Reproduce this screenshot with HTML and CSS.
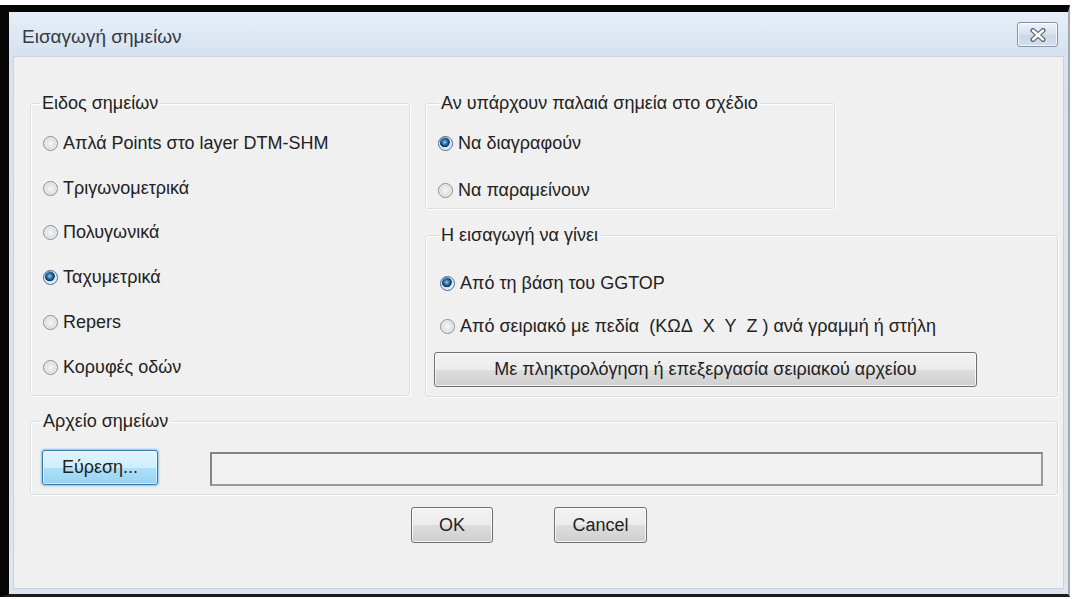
FILE: index.html
```html
<!DOCTYPE html>
<html lang="el">
<head>
<meta charset="utf-8">
<title>Εισαγωγή σημείων</title>
<link rel="stylesheet" href="styles.css">
</head>
<body>
<div class="window">
  <div class="titlebar">
    <span class="title">Εισαγωγή σημείων</span>
    <button class="close" aria-label="Κλείσιμο">
      <svg width="18" height="14" viewBox="0 0 18 14">
        <path d="M4 2.5 L14 11.5 M14 2.5 L4 11.5" stroke="#5d6670" stroke-width="5" stroke-linecap="round" fill="none"/>
        <path d="M4 2.5 L14 11.5 M14 2.5 L4 11.5" stroke="#ffffff" stroke-width="2.4" stroke-linecap="round" fill="none"/>
      </svg>
    </button>
  </div>

  <div class="client">
    <div class="top">
      <fieldset class="group g-kind">
        <legend>Ειδος σημείων</legend>
        <label class="opt"><span class="radio"></span>Απλά Points στο layer DTM-SHM</label>
        <label class="opt"><span class="radio"></span>Τριγωνομετρικά</label>
        <label class="opt"><span class="radio"></span>Πολυγωνικά</label>
        <label class="opt"><span class="radio on"></span>Ταχυμετρικά</label>
        <label class="opt"><span class="radio"></span>Repers</label>
        <label class="opt"><span class="radio"></span>Κορυφές οδών</label>
      </fieldset>

      <div class="right">
        <fieldset class="group g-old">
          <legend>Αν υπάρχουν παλαιά σημεία στο σχέδιο</legend>
          <label class="opt"><span class="radio on"></span>Να διαγραφούν</label>
          <label class="opt"><span class="radio"></span>Να παραμείνουν</label>
        </fieldset>

        <fieldset class="group g-src">
          <legend>Η εισαγωγή να γίνει</legend>
          <label class="opt"><span class="radio on"></span>Από τη βάση του GGTOP</label>
          <label class="opt"><span class="radio"></span>Από σειριακό με πεδία&nbsp; (ΚΩΔ&nbsp; Χ&nbsp; Υ&nbsp; Ζ ) ανά γραμμή ή στήλη</label>
          <button class="btn btn-wide">Με πληκτρολόγηση ή επεξεργασία σειριακού αρχείου</button>
        </fieldset>
      </div>
    </div>

    <fieldset class="group g-file">
      <legend>Αρχείο σημείων</legend>
      <div class="file-row">
        <button class="btn btn-focus">Εύρεση...</button>
        <div class="textbox"></div>
      </div>
    </fieldset>

    <div class="actions">
      <button class="btn btn-ok">OK</button>
      <button class="btn btn-cancel">Cancel</button>
    </div>
  </div>
</div>
</body>
</html>
```

FILE: styles.css
```css
* {
  box-sizing: border-box;
}

html, body {
  margin: 0;
  padding: 0;
  background: #ffffff;
}

body {
  font-family: "Liberation Sans", Arial, sans-serif;
  font-size: 18px;
  color: #222222;
}

/* window frame */
.window {
  margin-top: 5px;
  width: 1070px;
  height: 592px;
  border-top: 7px solid #050505;
  border-left: 9px solid #050505;
  border-bottom: 3px solid #1c1c1c;
  border-right: 2px solid #a4a9ae;
  background: linear-gradient(#e2eaf4, #d8e2ee 60px, #dde5ee);
  display: flex;
  flex-direction: column;
}

.titlebar {
  height: 44px;
  flex: none;
  display: flex;
  align-items: center;
  justify-content: space-between;
  padding: 0 10px 0 13px;
  background: linear-gradient(#e6eef8, #d6e2f0);
}

.title {
  font-size: 19px;
  color: #333a44;
  margin-top: 6px;
}

.close {
  width: 41px;
  height: 25px;
  margin-top: 1px;
  padding: 0;
  border: 1px solid #8495ab;
  border-radius: 3px;
  background: linear-gradient(#eef3f9, #d6e1ee 50%, #c8d6e7 51%, #d3dfec);
  box-shadow: inset 0 0 0 1px rgba(255, 255, 255, 0.7);
  display: flex;
  align-items: center;
  justify-content: center;
}

/* client area */
.client {
  flex: 1;
  margin: 0 4px 5px 4px;
  background: #f0f0f0;
  border: 1px solid #c9d3de;
  padding: 36px 5px 0 16px;
  display: flex;
  flex-direction: column;
}

.top {
  display: grid;
  grid-template-columns: 380px 633px;
  column-gap: 15px;
}

.right {
  display: flex;
  flex-direction: column;
  gap: 16px;
}

/* group boxes */
.group {
  margin: 0;
  min-width: 0;
  border: 1px solid #d5dfe5;
  border-radius: 3px;
  box-shadow: inset 1px 1px 0 #ffffff, 1px 1px 0 #ffffff;
  padding: 0;
}

.group legend {
  padding: 0 2px;
  line-height: 20px;
  color: #222222;
}

.g-kind {
  height: 303px;
  padding: 8px 0 0 12px;
}

.g-kind legend {
  margin-left: -3px;
}

.g-kind .opt {
  height: 44.8px;
}

.g-old {
  width: 410px;
  height: 116px;
  padding: 6.5px 0 0 12px;
}

.g-old legend {
  margin-left: 1px;
}

.g-old .opt {
  height: 47px;
}

.g-src {
  height: 172px;
  padding: 16.5px 0 0 14px;
}

.g-src legend {
  margin-left: -1px;
}

.g-src .opt {
  height: 43px;
}

.g-file {
  margin-top: 14px;
  height: 84px;
  padding: 19px 0 0 11px;
}

.g-file legend {
  margin-left: -1px;
}

/* radio rows */
.opt {
  display: flex;
  align-items: center;
  white-space: pre;
}

.radio {
  flex: none;
  width: 15px;
  height: 15px;
  margin-right: 5px;
  border-radius: 50%;
  border: 1px solid #8a8e93;
  background: radial-gradient(circle at 50% 50%, #f6f6f6 0, #e9e9e9 35%, #cbcdd0 100%);
  box-shadow: inset 0 0 0 1px rgba(255, 255, 255, 0.6);
}

.radio.on {
  border-color: #3b6f99;
  background:
    radial-gradient(circle at 44% 40%, #9fd0f2 0, #3f86bf 18%, #174b78 36%, #0f3558 44%, #cfe4f5 50%, #e7f1fa 100%);
}

/* buttons */
.btn {
  font-family: inherit;
  font-size: 18px;
  color: #222222;
  border: 1px solid #707070;
  border-radius: 3px;
  background: linear-gradient(#f3f3f3, #ebebeb 50%, #dddddd 51%, #cfcfcf);
  box-shadow: inset 0 0 0 1px rgba(255, 255, 255, 0.75);
  padding: 0;
}

.btn-wide {
  width: 543px;
  height: 35px;
  margin: 4.5px 0 0 -6px;
}

.btn-focus {
  width: 116px;
  height: 35px;
  border-color: #3478ad;
  background: linear-gradient(#e3f4fd, #cdeefc 50%, #aee0fa 51%, #96d3f2);
  box-shadow: inset 0 0 0 1px rgba(255, 255, 255, 0.55), 0 0 2px 1px rgba(70, 165, 225, 0.6);
}

.file-row {
  display: flex;
  align-items: flex-start;
}

.textbox {
  margin: 2px 0 0 52px;
  width: 833px;
  height: 34px;
  border: 2px solid #858585;
  border-right-color: #9a9a9a;
  border-bottom-color: #9a9a9a;
  background: #f2f2f2;
}

.actions {
  display: flex;
  gap: 61px;
  margin-top: 12px;
  padding-left: 381px;
}

.btn-ok {
  width: 82px;
  height: 36px;
}

.btn-cancel {
  width: 93px;
  height: 36px;
}
```
